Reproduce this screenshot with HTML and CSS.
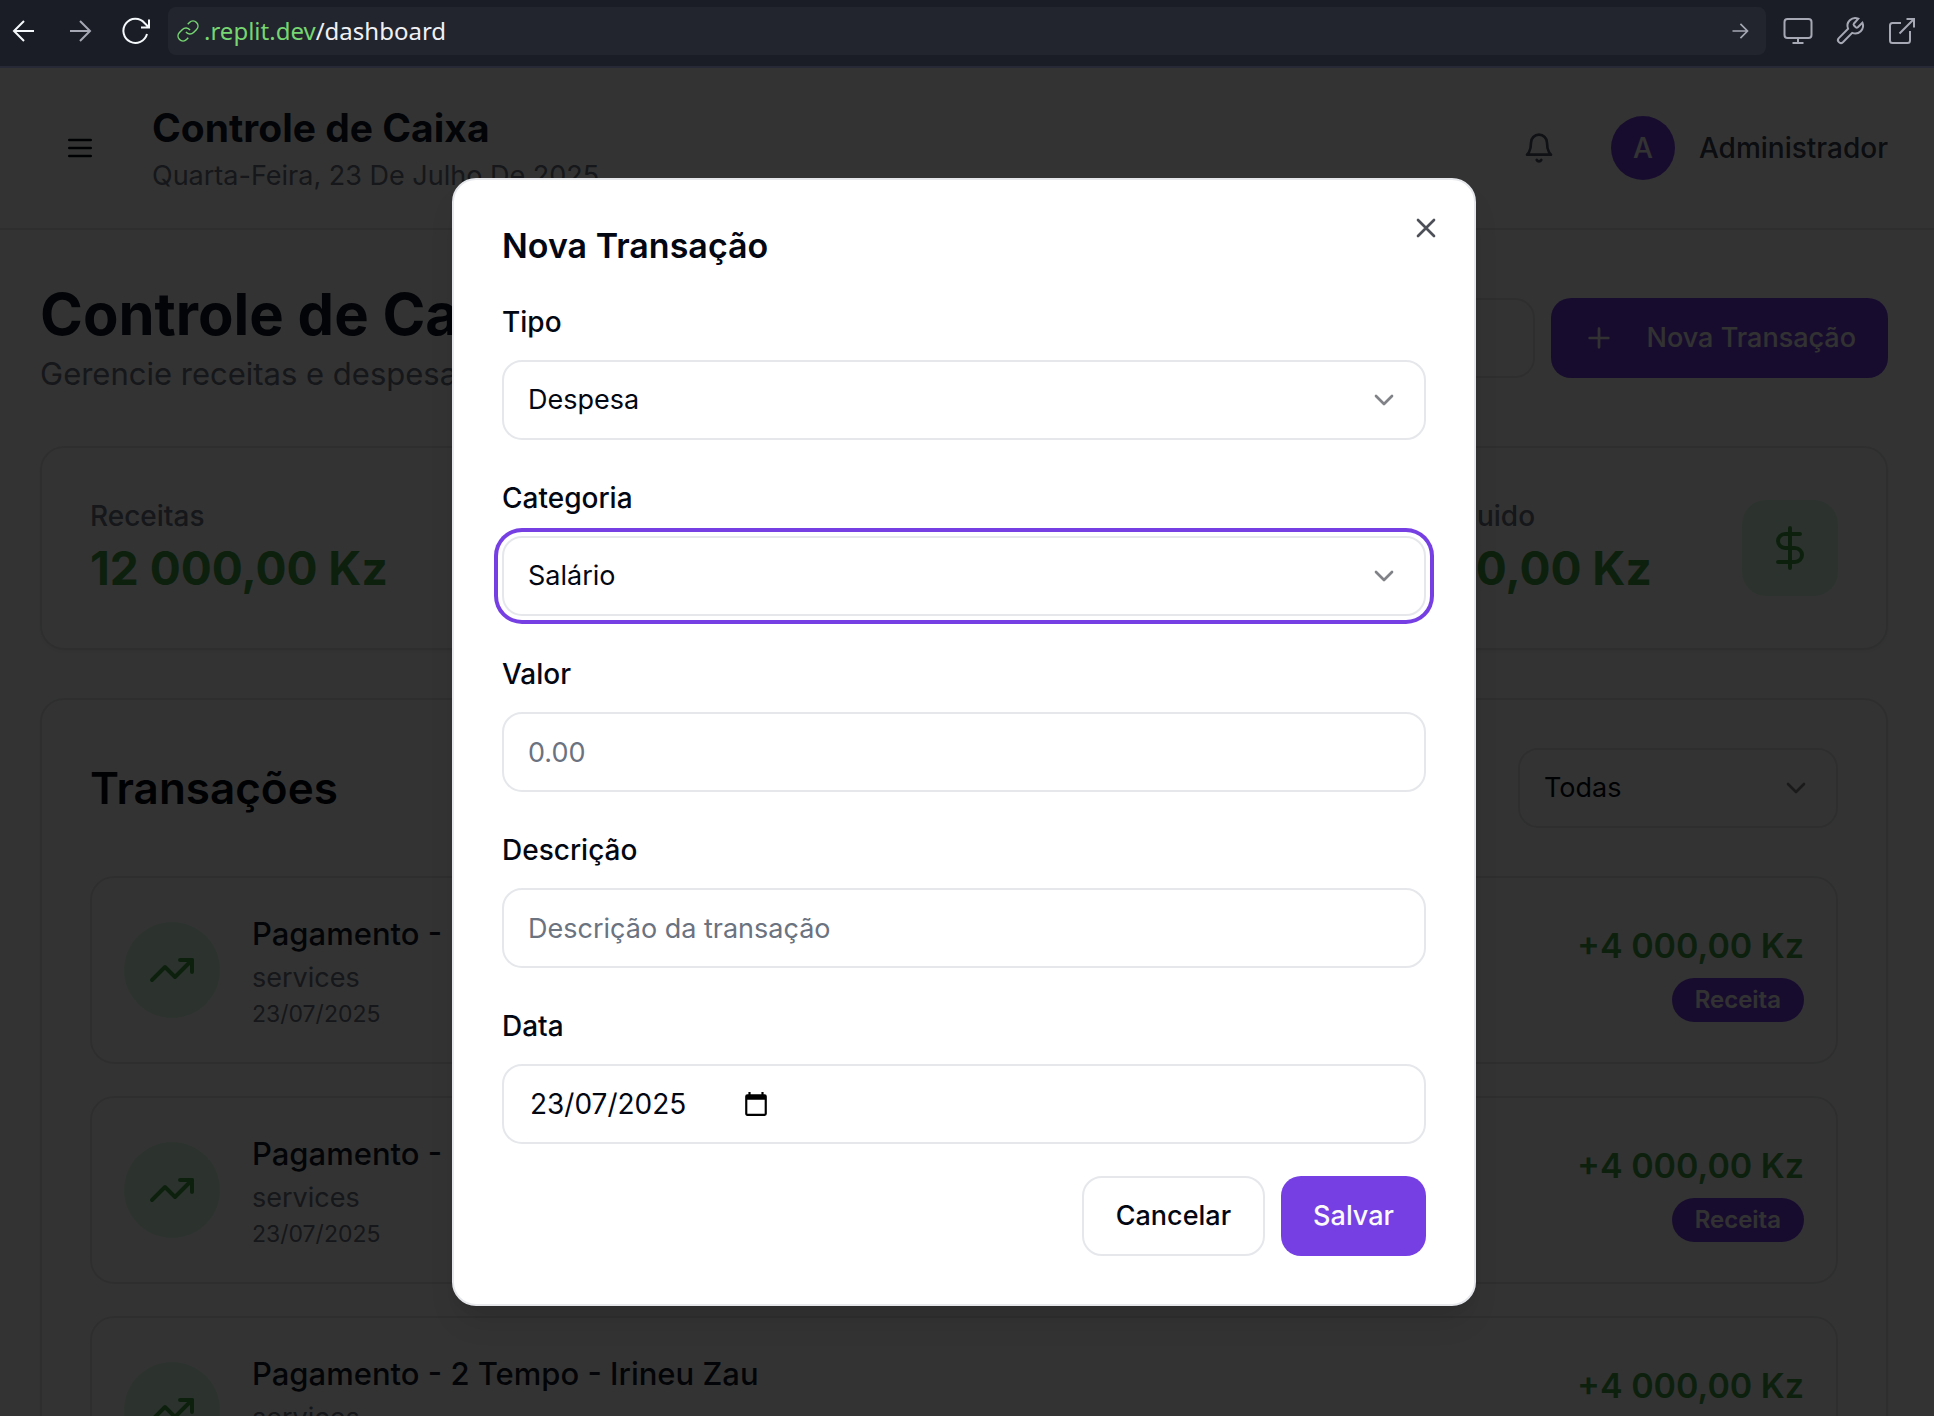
FILE: index.html
```html
<!DOCTYPE html>
<html lang="pt">
<head>
<meta charset="utf-8">
<title>Controle de Caixa</title>
<link rel="stylesheet" href="styles.css">
</head>
<body>
<svg class="sprite" aria-hidden="true">
  <symbol id="chevron" viewBox="0 0 24 24"><path d="m6 9 6 6 6-6"/></symbol>
  <symbol id="trend" viewBox="0 0 24 24"><path d="M22 7 13.5 15.5 8.5 10.5 2 17"/><path d="M16 7h6v6"/></symbol>
  <symbol id="dollar" viewBox="0 0 24 24"><path d="M12 2v20"/><path d="M17 5H9.5a3.5 3.5 0 0 0 0 7h5a3.5 3.5 0 0 1 0 7H6"/></symbol>
</svg>

<nav class="toolbar" aria-label="Navegador">
  <button class="tool tool-back" aria-label="Voltar"><svg viewBox="0 0 24 24"><path d="M22 12H2.500M12 2 2 12l10 10"/></svg></button>
  <button class="tool tool-forward" aria-label="Avançar"><svg viewBox="0 0 24 24"><path d="M2 12h19.500M12 2l10 10-10 10"/></svg></button>
  <button class="tool tool-reload" aria-label="Recarregar"><svg viewBox="0 0 32 32"><path d="M27 19A12 12 0 1 1 24.500 8L28.500 12M29 4.500V12.500H21"/></svg></button>
  <div class="address">
    <svg class="address-link" viewBox="0 0 24 24"><path d="M10 13a5 5 0 0 0 7.540.540l3-3a5 5 0 0 0-7.070-7.070l-1.720 1.710"/><path d="M14 11a5 5 0 0 0-7.540-.540l-3 3a5 5 0 0 0 7.070 7.070l1.710-1.710"/></svg>
    <a class="address-url" href="#"><span class="address-host">.replit.dev</span>/dashboard</a>
    <button class="tool tool-go" aria-label="Ir"><svg viewBox="0 0 24 24"><path d="M3 12h17.500M12.500 3.500 21 12l-8.500 8.500"/></svg></button>
  </div>
  <div class="tool-group">
    <button class="tool" aria-label="Dispositivo"><svg viewBox="0 0 32 32"><rect x="2.500" y="4" width="27" height="19" rx="3"/><path d="M16 23v5M10.500 28h11"/></svg></button>
    <button class="tool" aria-label="Ferramentas"><svg viewBox="0 0 32 32"><path d="M20 8.500a1.500 1.500 0 0 0 0 2l1.800 1.800a1.500 1.500 0 0 0 2 0l4.600-4.600a7.800 7.800 0 0 1-10.200 10.200l-9.300 9.300a2.900 2.900 0 0 1-4.100-4.100l9.300-9.300a7.800 7.800 0 0 1 10.200-10.200z"/></svg></button>
    <button class="tool" aria-label="Abrir em nova aba"><svg viewBox="0 0 32 32"><path d="M15 8H6.500A2.500 2.500 0 0 0 4 10.500v15A2.500 2.500 0 0 0 6.500 28h15a2.500 2.500 0 0 0 2.500-2.500V16M20.500 4H28v8.500M28 4 13.500 18.500"/></svg></button>
  </div>
</nav>

<div class="preview">
  <header class="header">
    <button class="icon-button" aria-label="Menu"><svg class="icon" viewBox="0 0 24 24"><path d="M4 6h16M4 12h16M4 18h16"/></svg></button>
    <div class="header-text">
      <p class="header-title">Controle de Caixa</p>
      <p class="header-date">Quarta-Feira, 23 De Julho De 2025</p>
    </div>
    <button class="icon-button bell" aria-label="Notificações"><svg class="icon" viewBox="0 0 24 24"><path d="M6 8a6 6 0 0 1 12 0c0 7 3 9 3 9H3s3-2 3-9"/><path d="M10.300 21a1.940 1.940 0 0 0 3.400 0"/></svg></button>
    <div class="user"><span class="avatar">A</span><span class="user-name">Administrador</span></div>
  </header>

  <main class="main">
    <div class="page-head">
      <div>
        <h1 class="page-title">Controle de Caixa</h1>
        <p class="page-sub">Gerencie receitas e despesas</p>
      </div>
      <div class="page-actions">
        <input class="input search" type="text" aria-label="Buscar transações">
        <button class="btn btn-primary"><svg class="icon" viewBox="0 0 24 24"><path d="M5 12h14M12 5v14"/></svg>Nova Transação</button>
      </div>
    </div>

    <div class="stats">
      <section class="card stat">
        <div><p class="stat-label">Receitas</p><p class="stat-value">12 000,00 Kz</p></div>
        <span class="stat-icon"><svg class="icon icon-lg"><use href="#trend"/></svg></span>
      </section>
      <section class="card stat">
        <div><p class="stat-label">Despesas</p><p class="stat-value">0,00 Kz</p></div>
        <span class="stat-icon"><svg class="icon icon-lg"><use href="#trend"/></svg></span>
      </section>
      <section class="card stat">
        <div><p class="stat-label">Saldo Líquido</p><p class="stat-value">12 000,00 Kz</p></div>
        <span class="stat-icon"><svg class="icon icon-lg"><use href="#dollar"/></svg></span>
      </section>
    </div>

    <section class="card list-card">
      <div class="list-head">
        <h2 class="list-title">Transações</h2>
        <div class="select list-filter">
          <select aria-label="Filtrar transações"><option>Todas</option></select>
          <svg class="icon"><use href="#chevron"/></svg>
        </div>
      </div>
      <ul class="list">
        <li class="item">
          <span class="item-icon"><svg class="icon icon-lg"><use href="#trend"/></svg></span>
          <div class="item-text"><p class="item-name">Pagamento - 2 Tempo - Irineu Zau</p><p class="item-category">services</p><p class="item-date">23/07/2025</p></div>
          <div class="item-side"><span class="item-amount">+4 000,00 Kz</span><span class="badge">Receita</span></div>
        </li>
        <li class="item">
          <span class="item-icon"><svg class="icon icon-lg"><use href="#trend"/></svg></span>
          <div class="item-text"><p class="item-name">Pagamento - 2 Tempo - Irineu Zau</p><p class="item-category">services</p><p class="item-date">23/07/2025</p></div>
          <div class="item-side"><span class="item-amount">+4 000,00 Kz</span><span class="badge">Receita</span></div>
        </li>
        <li class="item">
          <span class="item-icon"><svg class="icon icon-lg"><use href="#trend"/></svg></span>
          <div class="item-text"><p class="item-name">Pagamento - 2 Tempo - Irineu Zau</p><p class="item-category">services</p><p class="item-date">23/07/2025</p></div>
          <div class="item-side"><span class="item-amount">+4 000,00 Kz</span><span class="badge">Receita</span></div>
        </li>
      </ul>
    </section>
  </main>

  <div class="overlay">
    <div class="dialog" role="dialog" aria-modal="true" aria-labelledby="dialog-title">
      <h2 class="dialog-title" id="dialog-title">Nova Transação</h2>
      <form class="form">
        <div class="field">
          <label for="tipo">Tipo</label>
          <div class="select"><select id="tipo"><option>Despesa</option></select><svg class="icon"><use href="#chevron"/></svg></div>
        </div>
        <div class="field">
          <label for="categoria">Categoria</label>
          <div class="select is-focused"><select id="categoria"><option>Salário</option></select><svg class="icon"><use href="#chevron"/></svg></div>
        </div>
        <div class="field">
          <label for="valor">Valor</label>
          <input class="input" id="valor" type="text" inputmode="decimal" placeholder="0.00">
        </div>
        <div class="field">
          <label for="descricao">Descrição</label>
          <input class="input" id="descricao" type="text" placeholder="Descrição da transação">
        </div>
        <div class="field">
          <label for="data">Data</label>
          <div class="date">
            <input id="data" type="text" value="23/07/2025">
            <button type="button" aria-label="Abrir calendário"><svg viewBox="0 0 24 24"><path d="M20 3h-1V1h-2v2H7V1H5v2H4a2 2 0 0 0-2 2v16c0 1.100.900 2 2 2h16a2 2 0 0 0 2-2V5a2 2 0 0 0-2-2zm0 18H4V8h16z"/></svg></button>
          </div>
        </div>
        <div class="dialog-actions">
          <button type="button" class="btn btn-outline">Cancelar</button>
          <button type="button" class="btn btn-primary">Salvar</button>
        </div>
      </form>
      <button class="dialog-close" aria-label="Fechar"><svg class="icon" viewBox="0 0 24 24"><path d="M18 6 6 18M6 6l12 12"/></svg></button>
    </div>
  </div>
</div>
</body>
</html>
```
FILE: styles.css
```css
:root {
  --primary: #753fe4;
  --border: #e5e7eb;
  --text: #030712;
  --muted: #6b7280;
  --green: #43a047;
  --radius-md: 20px;
  --radius-lg: 24px;
}

* { box-sizing: border-box; }

body {
  margin: 0;
  height: 100vh;
  display: flex;
  flex-direction: column;
  overflow: hidden;
  background: #fff;
  color: var(--text);
  font-family: Inter, "Liberation Sans", sans-serif;
  font-size: 27px;
  line-height: 40px;
}

h1, h2, p, ul { margin: 0; padding: 0; }
ul { list-style: none; }
button, input, select { font: inherit; color: inherit; }
button { border: 0; padding: 0; background: none; cursor: pointer; }
.sprite { display: none; }

.icon {
  flex: none;
  width: 32px;
  height: 32px;
  fill: none;
  stroke: currentColor;
  stroke-width: 2;
  stroke-linecap: round;
  stroke-linejoin: round;
}
.icon-lg { width: 48px; height: 48px; }

/* Browser bar */
.toolbar {
  flex: none;
  display: flex;
  align-items: center;
  height: 68px;
  padding: 0 16px 4px 12px;
  background: #1a1d25;
  border-bottom: 2px solid #272a36;
}
.tool { flex: none; display: flex; color: #a6a9b4; }
.tool svg { width: 32px; height: 32px; fill: none; stroke: currentColor; stroke-width: 2; }
.tool-back, .tool-reload { color: #f5f9fc; }
.tool-back { margin-right: 32px; }
.tool-forward { margin-right: 28px; }
.tool-reload { margin-right: 16px; }
.tool-back svg, .tool-forward svg { width: 24px; height: 24px; }
.tool-group { display: flex; gap: 20px; margin-left: 16px; }
.address {
  flex: 1;
  display: flex;
  align-items: center;
  height: 48px;
  padding: 0 16px 0 8px;
  border-radius: 8px;
  background: #22252e;
}
.address-link { width: 24px; height: 24px; fill: none; stroke: #76d672; stroke-width: 1.5; margin-right: 4px; }
.address-url {
  flex: 1;
  color: #f0f1f4;
  font-family: "Noto Sans", sans-serif;
  font-size: 24px;
  text-decoration: none;
}
.address-host { color: #76d672; }
.tool-go svg { width: 20px; height: 20px; }

/* Page behind the dialog */
.preview { flex: 1; min-height: 0; position: relative; overflow: hidden; }
.header {
  display: flex;
  align-items: center;
  height: 162px;
  padding: 0 46px 0 40px;
  border-bottom: 2px solid var(--border);
}
.icon-button { width: 80px; height: 80px; display: flex; align-items: center; justify-content: center; }
.header-text { flex: 1; margin-left: 32px; }
.header-title { font-size: 39px; line-height: 56px; font-weight: 700; color: #111827; }
.header-date { color: var(--muted); }
.bell { color: #4b5563; }
.user { display: flex; align-items: center; gap: 24px; margin-left: 32px; font-size: 28px; font-weight: 500; }
.user-name { color: #374151; }
.avatar {
  display: flex;
  align-items: center;
  justify-content: center;
  width: 64px;
  height: 64px;
  border-radius: 50%;
  background: var(--primary);
  color: #fff;
}

.main { display: flex; flex-direction: column; gap: 48px; padding: 48px 46px 48px 40px; }
.page-head { display: flex; align-items: center; justify-content: space-between; }
.page-title { font-size: 58px; line-height: 72px; font-weight: 700; color: #111827; }
.page-sub { font-size: 31px; line-height: 48px; color: var(--muted); }
.page-actions { display: flex; gap: 16px; }

.btn {
  flex: none;
  display: flex;
  align-items: center;
  gap: 32px;
  height: 80px;
  padding: 0 32px;
  border-radius: var(--radius-md);
  font-weight: 500;
}
.btn-outline { border: 2px solid var(--border); background: #fff; }
.btn-primary { background: var(--primary); color: #fafafa; }

.card {
  border: 2px solid var(--border);
  border-radius: var(--radius-lg);
  background: #fff;
  padding: 48px;
  box-shadow: 0 2px 4px rgba(0, 0, 0, .05);
}
.stats { display: grid; grid-template-columns: repeat(3, 1fr); gap: 48px; }
.stat { display: flex; align-items: center; justify-content: space-between; }
.stat-label { font-size: 28px; font-weight: 500; color: var(--muted); }
.stat-value { font-size: 46px; line-height: 64px; font-weight: 700; color: var(--green); }
.stat-icon, .item-icon {
  display: flex;
  align-items: center;
  justify-content: center;
  width: 96px;
  height: 96px;
  background: #dcfce7;
  color: var(--green);
}
.stat-icon { border-radius: var(--radius-lg); }
.item-icon { border-radius: 50%; }

.list-head { display: flex; align-items: center; justify-content: space-between; margin-bottom: 48px; }
.list-title { font-size: 44px; line-height: 48px; font-weight: 600; }
.list-filter { width: 320px; }
.list { display: flex; flex-direction: column; gap: 32px; }
.item {
  display: flex;
  align-items: center;
  gap: 32px;
  padding: 32px;
  border: 2px solid var(--border);
  border-radius: var(--radius-lg);
}
.item-text { flex: 1; color: var(--muted); }
.item-name { font-size: 31px; line-height: 48px; font-weight: 500; color: #111827; }
.item-date { font-size: 23px; line-height: 32px; }
.item-side { display: flex; flex-direction: column; align-items: flex-end; gap: 4px; }
.item-amount { font-size: 34px; line-height: 56px; font-weight: 600; color: var(--green); }
.badge {
  padding: 4px 23px;
  border-radius: 22px;
  background: var(--primary);
  color: #fafafa;
  font-size: 24px;
  line-height: 36px;
  font-weight: 600;
}

/* Form controls */
.select { display: grid; align-items: center; }
.select select, .select .icon { grid-area: 1 / 1; }
.select select { appearance: none; outline: 0; }
.select .icon { justify-self: end; margin-right: 26px; opacity: .5; pointer-events: none; }
.select select, .input, .date {
  width: 100%;
  height: 80px;
  padding: 0 24px;
  border: 2px solid var(--border);
  border-radius: var(--radius-md);
  background: #fff;
}
.is-focused select { box-shadow: 0 0 0 4px #fff, 0 0 0 8px var(--primary); }
.input::placeholder { color: var(--muted); opacity: 1; }
.search { width: 320px; }
.date { display: flex; align-items: center; padding: 0 26px; }
.date input { width: 213px; padding: 0; border: 0; outline: 0; background: none; font-size: 28px; }
.date button { display: flex; }
.date svg { width: 26px; height: 26px; }

/* Dialog */
.overlay {
  position: absolute;
  inset: 0;
  display: flex;
  align-items: center;
  justify-content: center;
  padding-right: 6px;
  background: rgba(0, 0, 0, .8);
}
.dialog {
  position: relative;
  width: 1024px;
  padding: 48px;
  border: 2px solid var(--border);
  border-radius: var(--radius-lg);
  background: #fff;
  box-shadow: 0 20px 30px -6px rgba(0, 0, 0, .1), 0 8px 12px -8px rgba(0, 0, 0, .1);
}
.dialog-title { margin-bottom: 32px; font-size: 34px; line-height: 36px; font-weight: 600; }
.form { display: flex; flex-direction: column; gap: 32px; }
.field label { display: block; padding-top: 4px; margin-bottom: 16px; font-size: 28px; line-height: 44px; font-weight: 500; }
.dialog-actions { display: flex; justify-content: flex-end; gap: 16px; }
.dialog-close { position: absolute; top: 32px; right: 32px; display: flex; opacity: .7; }
```
